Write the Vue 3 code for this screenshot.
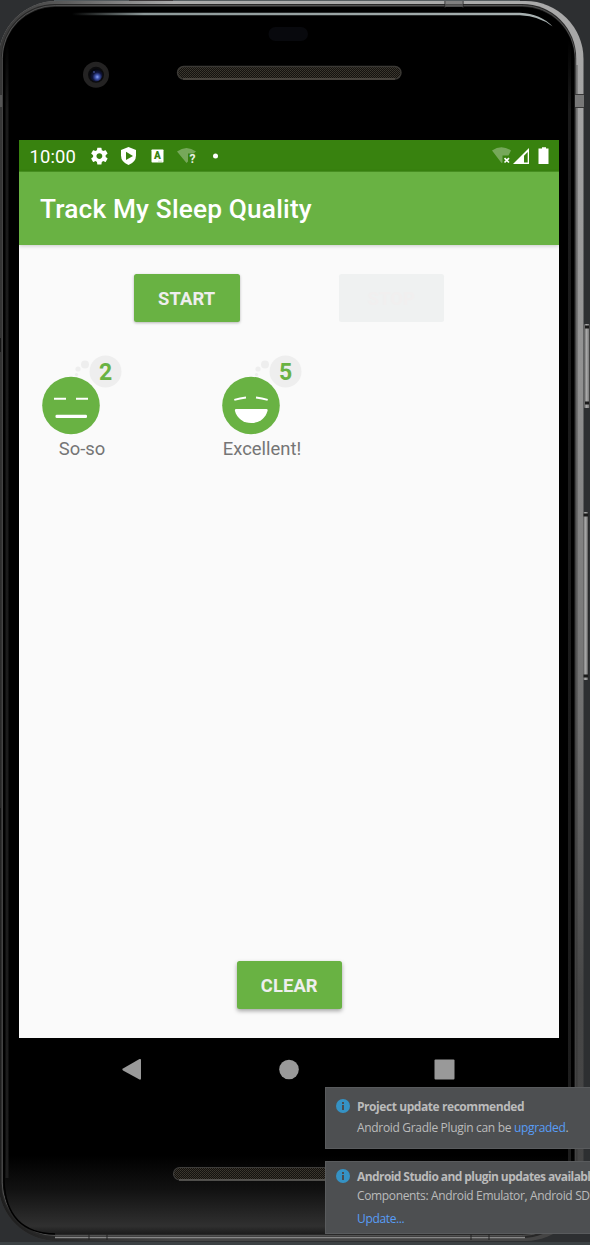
<script setup>
const nights = [
  { score: 2, label: 'So-so', mood: 'flat' },
  { score: 5, label: 'Excellent!', mood: 'happy' },
]
</script>

<template>
  <div class="desktop">
    <svg class="device" width="590" height="1245" viewBox="0 0 590 1245">
      <defs>
        <linearGradient id="metal" x1="0" y1="0" x2="0" y2="1">
          <stop offset="0" stop-color="#aaa" />
          <stop offset=".3" stop-color="#929292" />
          <stop offset=".58" stop-color="#707070" />
          <stop offset=".8" stop-color="#464646" />
          <stop offset="1" stop-color="#454545" />
        </linearGradient>
        <linearGradient id="leftShade" x1="0" y1="0" x2="1" y2="0">
          <stop offset="0" stop-color="#111" stop-opacity=".75" />
          <stop offset=".12" stop-color="#111" stop-opacity=".5" />
          <stop offset=".3" stop-color="#111" stop-opacity="0" />
        </linearGradient>
        <linearGradient id="chin" x1="0" y1="0" x2="0" y2="1">
          <stop offset="0" stop-color="#000" />
          <stop offset=".45" stop-color="#121212" />
          <stop offset=".9" stop-color="#303030" />
          <stop offset="1" stop-color="#1c1c1c" />
        </linearGradient>
        <linearGradient id="sideGlow" gradientUnits="userSpaceOnUse" x1="0" y1="40" x2="0" y2="1200">
          <stop offset="0" stop-color="#1a1a1a" stop-opacity="0" />
          <stop offset=".06" stop-color="#1a1a1a" />
          <stop offset="1" stop-color="#1d1d1d" />
        </linearGradient>
        <linearGradient id="shine" x1="0" y1="0" x2="1" y2="0">
          <stop offset="0" stop-color="#8d9999" stop-opacity="0" />
          <stop offset=".15" stop-color="#8d9999" />
          <stop offset="1" stop-color="#a9b2b2" />
        </linearGradient>
        <linearGradient id="key" x1="0" y1="0" x2="1" y2="0">
          <stop offset="0" stop-color="#555" />
          <stop offset=".4" stop-color="#aaa" />
          <stop offset=".75" stop-color="#858585" />
          <stop offset="1" stop-color="#222" />
        </linearGradient>
        <pattern id="mesh" width="2" height="2" patternUnits="userSpaceOnUse">
          <rect width="2" height="2" fill="#14120f" />
          <rect width="1" height="1" fill="#3d3930" />
          <rect x="1" y="1" width="1" height="1" fill="#37332b" />
        </pattern>
        <radialGradient id="lens" cx=".6" cy=".65" r=".6">
          <stop offset="0" stop-color="#8fa5f5" />
          <stop offset=".25" stop-color="#4459b5" />
          <stop offset=".6" stop-color="#10153c" />
          <stop offset="1" stop-color="#05060c" />
        </radialGradient>
      </defs>

      <rect x="54" width="76" height="2" fill="#535a5d" />
      <rect x="129" width="44" height="2" fill="#3b383a" />
      <rect x="173" width="347" height="2" fill="#565d60" />
      <rect y="1242" width="590" height="3" fill="#3c4144" />

      <rect x="-1.5" y="1" width="585" height="1240" rx="58" fill="url(#metal)" />
      <rect x="-1.5" y="1" width="585" height="1240" rx="58" fill="url(#leftShade)" />
      <rect x="1.2" y="4" width="575" height="1234" rx="54" fill="#282828" />
      <rect x="2.2" y="5.5" width="573" height="1230" rx="53" fill="none" stroke="#5c5c5c" stroke-width=".8" />
      <rect x="3" y="7" width="571.5" height="1227" rx="52" fill="#000" />
      <path d="M3 1155H574V1181Q572 1233 522 1234H55Q5 1233 3 1181Z" fill="url(#chin)" />
      <path d="M7 40V1178" fill="none" stroke="url(#sideGlow)" stroke-width="3" />
      <path d="M569.500 40V1175" fill="none" stroke="url(#sideGlow)" stroke-width="3" />
      <path d="M4 85V1181Q6 1233 55 1234" fill="none" stroke="#000" stroke-width="1.500" />
      <path d="M577 65V1180" stroke="#333" stroke-opacity=".6" />
      <path d="M55 1237.500H525" stroke="#888" stroke-width="1.500" />
      <path d="M89 1234V1240M107 1234V1240M471 1234V1240M489 1234V1240M445 1V8M463 1V8" stroke="#222" />
      <path d="M445 1H463V7H445Z" fill="#666" fill-opacity=".6" />
      <path d="M72 12.800H520Q541 14 552.500 26.500Q540 16 520 15.200H72Z" fill="url(#shine)" />
      <rect x="575" y="94" width="9" height="14" fill="#777" />
      <path d="M575 94.500H584M575 107.500H584" stroke="#383838" />
      <rect y="95" width="2" height="12" fill="#555" />
      <path d="M0 338H1V352H0M0 808H1V830H0" fill="#151515" />

      <rect x="584" y="324" width="6" height="84" rx="1" fill="url(#key)" />
      <path d="M585 327H589M585 403H589" stroke="#1a1a1a" stroke-width="3" />
      <rect x="583" y="512" width="5.500" height="168" rx="1" fill="url(#key)" />
      <path d="M583.500 515H588M583.500 676H588" stroke="#1a1a1a" stroke-width="3" />

      <rect x="268.500" y="27" width="39.500" height="14" rx="7" fill="#08090d" />
      <circle cx="96" cy="74.800" r="13" fill="#242323" />
      <circle cx="96" cy="74.800" r="8" fill="#0b0b0d" />
      <circle cx="96" cy="75" r="6.500" fill="url(#lens)" />
      <circle cx="94" cy="72" r=".8" fill="#5265b8" />
      <rect x="177.500" y="66.500" width="223.500" height="12.500" rx="6.200" fill="url(#mesh)" stroke="#3b3935" stroke-width="1.400" />
      <path d="M183 79H395" stroke="#605b52" />
      <rect x="173.500" y="1167.500" width="231" height="12.500" rx="6.200" fill="url(#mesh)" stroke="#3d3c3a" stroke-width="1.200" />
      <path d="M179 1180H400" stroke="#7b7974" />
    </svg>

    <main class="screen">
      <div class="status">
        <span class="clock">10:00</span>
        <svg class="status-left" width="136" height="32" viewBox="0 0 136 32" fill="#fff">
          <g transform="translate(7.300 6) scale(.84)">
            <path d="M19.430 12.980c.04-.32.07-.64.07-.98s-.03-.66-.07-.98l2.110-1.650c.19-.15.24-.42.12-.64l-2-3.460c-.12-.22-.39-.3-.61-.22l-2.490 1c-.52-.4-1.080-.73-1.690-.98l-.38-2.650A.488.488 0 0 0 14 2h-4c-.25 0-.46.18-.49.42l-.38 2.650c-.61.25-1.170.59-1.690.98l-2.490-1c-.23-.09-.49 0-.61.22l-2 3.460c-.13.22-.07.49.12.64l2.110 1.650c-.04.32-.07.65-.07.98s.03.66.07.98l-2.110 1.650c-.19.15-.24.42-.12.64l2 3.460c.12.22.39.3.61.22l2.490-1c.52.4 1.080.73 1.690.98l.38 2.650c.03.24.24.42.49.42h4c.25 0 .46-.18.49-.42l.38-2.650c.61-.25 1.170-.59 1.690-.98l2.490 1c.23.09.49 0 .61-.22l2-3.460c.12-.22.07-.49-.12-.64l-2.110-1.650zM12 15.500c-1.930 0-3.500-1.570-3.500-3.500s1.570-3.500 3.500-3.500 3.500 1.570 3.500 3.500-1.570 3.500-3.500 3.500z" />
          </g>
          <path d="M46.500 7L54 10V15.500Q54 22 46.500 25Q39 22 39 15.500V10Z" />
          <path d="M44 11.800V20L51 15.900Z" fill="#38820f" />
          <rect x="69.500" y="9.500" width="12" height="13" rx=".7" />
          <text x="75.300" y="19" class="letter">A</text>
          <path d="M76.500 21.200H77.500M78.500 21.200H79.500" stroke="#9cc187" />
          <path d="M95 11.500Q104.500 4.500 114 11.500L111.500 13.500H106V21.500L104.500 23Z" fill="#76a85a" />
          <text x="110.500" y="22.500" class="question">?</text>
          <circle cx="133.500" cy="16" r="2.500" />
        </svg>
        <svg class="status-right" width="60" height="32" viewBox="0 0 60 32" fill="#fff">
          <path d="M2 10.500Q11.500 4 21 10.500L18.500 15.500H12.500V22.500L11.500 23Z" fill="#76a85a" />
          <path d="M14.500 18.200L19 22.500M19 18.200L14.500 22.500" stroke="#fff" stroke-width="1.700" />
          <path fill-rule="evenodd" d="M39 8V24H23ZM37.700 12L34 15.700V22.600H37.700Z" />
          <path d="M50.500 8.500H52V7.200H56V8.500H58.500V24H48.500V8.500Z" />
        </svg>
      </div>
      <header class="app-bar">Track My Sleep Quality</header>
      <section class="content">
        <div class="actions">
          <button class="btn">START</button>
          <button class="btn stop" disabled>STOP</button>
        </div>
        <div class="nights">
          <div v-for="n in nights" :key="n.score" class="night">
            <svg width="126" height="84" viewBox="0 0 126 84">
              <g fill="#eee">
                <circle cx="34.500" cy="22.500" r="1.600" />
                <circle cx="36" cy="17" r="2.600" />
                <circle cx="43" cy="12.500" r="4" />
                <circle cx="63.500" cy="19.500" r="16" />
              </g>
              <circle cx="29" cy="53.500" r="28.800" fill="#69b243" />
              <g v-if="n.mood === 'flat'" fill="#fff">
                <path d="M12 45.800H24V47.800H12ZM34 45.800H46V47.800H34Z" />
                <rect x="13.500" y="62.800" width="31.500" height="3.200" rx="1.300" />
              </g>
              <g v-else fill="#fff">
                <path d="M12.300 47.900Q18 46.300 24 45.500M34 45.500Q40 46.300 45.700 47.900" fill="none" stroke="#fff" stroke-width="1.800" />
                <path d="M14 57H44.500Q46 57 45.500 59C43.500 66.500 37 71 29.200 71S15 66.500 13 59Q12.500 57 14 57Z" />
              </g>
              <text x="63.500" y="27.500" class="score">{{ n.score }}</text>
            </svg>
            <span class="label">{{ n.label }}</span>
          </div>
        </div>
        <button class="btn clear">CLEAR</button>
      </section>
      <nav class="nav">
        <svg width="540" height="62" viewBox="0 0 540 62" fill="#999">
          <path d="M104 30.500L120.500 21Q122 20.500 122 22V40.500Q122 42 120.500 41.500L104 32.500Q102.500 31.500 104 30.500Z" />
          <circle cx="270" cy="31.500" r="9.800" />
          <rect x="415.500" y="21.500" width="20" height="20" rx="1" />
        </svg>
      </nav>
    </main>

    <aside class="notices">
      <div class="notice first">
        <svg width="14" height="14" viewBox="0 0 14 14"><circle cx="7" cy="7" r="7" fill="#3592c4" /><path d="M6 3H8V5H6ZM6 6H8V11H6Z" fill="#4b4d4f" /></svg>
        <div class="body">
          <b class="t1">Project update recommended</b>
          <p class="p1">Android Gradle Plugin can be <a>upgraded</a>.</p>
        </div>
      </div>
      <div class="notice second">
        <svg width="14" height="14" viewBox="0 0 14 14"><circle cx="7" cy="7" r="7" fill="#3592c4" /><path d="M6 3H8V5H6ZM6 6H8V11H6Z" fill="#4b4d4f" /></svg>
        <div class="body">
          <b class="t2">Android Studio and plugin updates availabl</b>
          <p class="p2">Components: Android Emulator, Android SD</p>
          <p class="p3"><a>Update...</a></p>
        </div>
      </div>
    </aside>
  </div>
</template>

<style>
body { margin: 0; background: #2d2f31; }
</style>

<style scoped>
.desktop { position: relative; width: 590px; height: 1245px; overflow: hidden; background: #2d2f31; font-family: Roboto, sans-serif; box-sizing: border-box; padding: 140px 31px 0 19px; }
.device { position: absolute; left: 0; top: 0; }
.screen { position: relative; width: 540px; height: 960px; display: flex; flex-direction: column; }
.status { height: 31px; background: #38820f; border-bottom: 1px solid #4b9623; display: flex; color: #fff; flex: none; }
.clock { width: 53px; padding-left: 10.500px; line-height: 33px; font-size: 18.400px; letter-spacing: .15px; box-sizing: content-box; }
.status-left { flex: none; margin-left: -.5px; }
.status-right { margin-left: auto; margin-right: 9px; }
.letter { font: 900 10px Roboto, sans-serif; text-anchor: middle; fill: #38820f; }
.question { font: 700 12px Roboto, sans-serif; text-anchor: middle; fill: #e8f1e3; }
.app-bar { position: relative; height: 73px; flex: none; background: #69b243; color: #fff; padding-left: 21px; font-size: 26.250px; font-weight: 500; line-height: 75px; letter-spacing: .17px; box-shadow: 0 1px 4px rgba(0,0,0,.2); }
.content { height: 793px; flex: none; background: #fafafa; display: flex; flex-direction: column; box-sizing: border-box; padding: 29px 0; }
.actions { display: flex; gap: 99px; padding-left: 115px; }
.btn { width: 105.500px; height: 48px; border: 0; border-radius: 2.500px; padding: 0; background: #69b243; color: #eee; font: 700 18.400px/49px Roboto, sans-serif; letter-spacing: .1px; box-shadow: 0 1px 3px rgba(0,0,0,.28); }
.stop { background: #eff1f1; color: #f1efef; box-shadow: none; }
.nights { display: flex; padding: 30px 0 0 23px; }
.night { width: 180px; display: flex; flex-direction: column; }
.night svg { display: block; }
.score { font: 700 23px Roboto, sans-serif; text-anchor: middle; fill: #69b243; }
.label { width: 80px; margin-top: 2px; text-align: center; font-size: 18.400px; line-height: 22px; color: #757575; }
.clear { margin: auto auto 0 217.500px; box-shadow: 0 2px 4px rgba(0,0,0,.35); }
.nav { height: 62px; flex: none; background: #000; }
.notices { position: absolute; left: 325px; top: 1087px; width: 265px; font-family: "Open Sans", sans-serif; display: flex; flex-direction: column; gap: 12px; color: #bbb; font-size: 12px; white-space: nowrap; }
.notice { display: flex; box-sizing: border-box; width: 265px; padding: 0 0 0 10px; background: #4d4f51; border: 1px solid #595b5d; border-right: 0; gap: 7px; line-height: 18px; }
.first { height: 62px; }
.first svg { margin-top: 11px; }
.second { height: 73px; }
.second svg { margin-top: 7px; }
.notice svg { flex: none; }
.body { display: flex; flex-direction: column; align-items: flex-start; }
p { margin: 0; }
a { color: #589df6; }
.t1 { margin-top: 10px; letter-spacing: -.43px; }
.t2 { margin-top: 6px; letter-spacing: -.58px; }
.p1 { margin-top: 3px; letter-spacing: -.32px; }
.p2 { margin-top: 1px; letter-spacing: -.35px; }
.p3 { margin-top: 5px; letter-spacing: -.35px; }
</style>
